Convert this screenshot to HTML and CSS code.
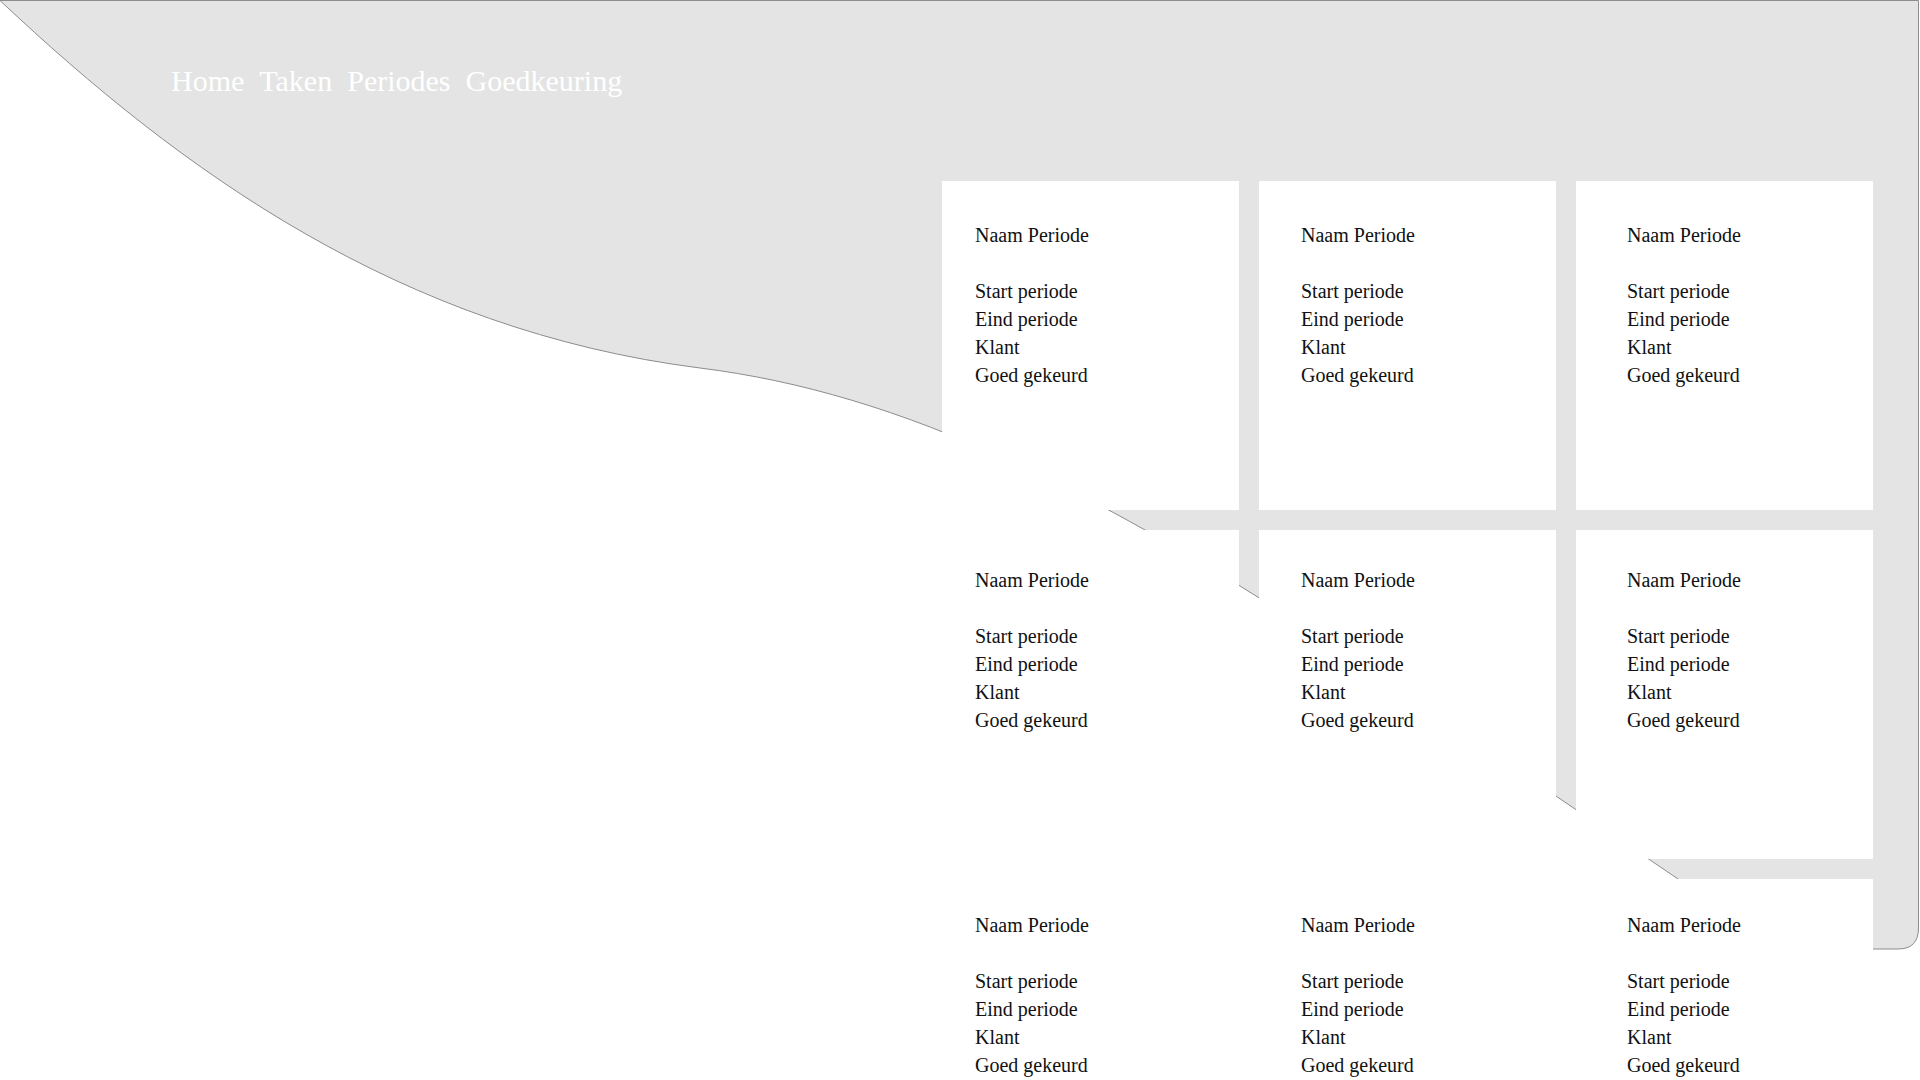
FILE: index.html
```html
<!DOCTYPE html>
<html lang="nl">
<head>
<meta charset="utf-8">
<title>Periodes</title>
<link rel="stylesheet" href="styles.css">
</head>
<body>
<div class="page">
  <svg class="backdrop" width="1920" height="960" viewBox="0 0 1920 960" aria-hidden="true">
    <path d="M0,0.5 C180,170 400,330 700,368 C900,393 1100,486 1400,690 L1781,949 L1898,949 Q1918.5,949 1918.5,928 L1918.5,0.5 Z" fill="#e4e4e4" stroke="#8c8c8c" stroke-width="1"/>
  </svg>
  <nav class="nav">
    <a class="nav-link" href="#">Home</a>
    <a class="nav-link" href="#">Taken</a>
    <a class="nav-link" href="#">Periodes</a>
    <a class="nav-link" href="#">Goedkeuring</a>
  </nav>
  <main class="grid">
    <section class="card"><p class="name">Naam Periode</p><ul class="fields"><li>Start periode</li><li>Eind periode</li><li>Klant</li><li>Goed gekeurd</li></ul></section>
    <section class="card"><p class="name">Naam Periode</p><ul class="fields"><li>Start periode</li><li>Eind periode</li><li>Klant</li><li>Goed gekeurd</li></ul></section>
    <section class="card"><p class="name">Naam Periode</p><ul class="fields"><li>Start periode</li><li>Eind periode</li><li>Klant</li><li>Goed gekeurd</li></ul></section>
    <section class="card"><p class="name">Naam Periode</p><ul class="fields"><li>Start periode</li><li>Eind periode</li><li>Klant</li><li>Goed gekeurd</li></ul></section>
    <section class="card"><p class="name">Naam Periode</p><ul class="fields"><li>Start periode</li><li>Eind periode</li><li>Klant</li><li>Goed gekeurd</li></ul></section>
    <section class="card"><p class="name">Naam Periode</p><ul class="fields"><li>Start periode</li><li>Eind periode</li><li>Klant</li><li>Goed gekeurd</li></ul></section>
    <section class="card"><p class="name">Naam Periode</p><ul class="fields"><li>Start periode</li><li>Eind periode</li><li>Klant</li><li>Goed gekeurd</li></ul></section>
    <section class="card"><p class="name">Naam Periode</p><ul class="fields"><li>Start periode</li><li>Eind periode</li><li>Klant</li><li>Goed gekeurd</li></ul></section>
    <section class="card"><p class="name">Naam Periode</p><ul class="fields"><li>Start periode</li><li>Eind periode</li><li>Klant</li><li>Goed gekeurd</li></ul></section>
  </main>
</div>
</body>
</html>
```
FILE: styles.css
```css
html, body {
  margin: 0;
  padding: 0;
  background: #ffffff;
}

body {
  font-family: "Liberation Serif", "Times New Roman", serif;
  color: #111111;
}

.page {
  position: relative;
  width: 1920px;
  min-height: 1080px;
}

.backdrop {
  position: absolute;
  top: 0;
  left: 0;
  z-index: 0;
  display: block;
}

.nav {
  position: relative;
  z-index: 1;
  display: flex;
  gap: 15px;
  padding: 64px 0 0 171px;
  font-size: 30px;
  line-height: 34px;
}

.nav-link {
  color: #ffffff;
  text-decoration: none;
}

.grid {
  position: relative;
  z-index: 1;
  display: grid;
  grid-template-columns: repeat(3, 297px);
  grid-auto-rows: 329px;
  gap: 20px;
  margin: 83px 0 0 942px;
}

.card {
  background: #ffffff;
  padding: 40px 0 0 33px;
  font-size: 20px;
  line-height: 28px;
  box-sizing: border-box;
}

.card:nth-child(3n+2) {
  padding-left: 42px;
}

.card:nth-child(3n) {
  padding-left: 51px;
}

.card:nth-child(n+4) {
  padding-top: 36px;
}

.card:nth-child(n+7) {
  padding-top: 32px;
}

.name {
  margin: 0;
}

.fields {
  list-style: none;
  margin: 28px 0 0 0;
  padding: 0;
}
```
